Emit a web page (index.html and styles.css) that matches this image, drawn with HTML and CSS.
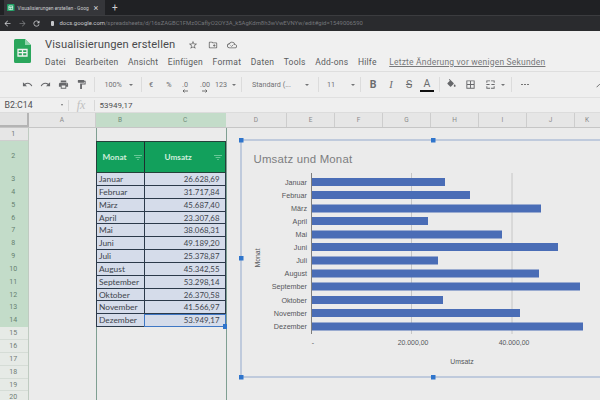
FILE: index.html
```html
<!DOCTYPE html>
<html lang="de">
<head>
<meta charset="utf-8">
<title>Visualisierungen erstellen</title>
<link rel="stylesheet" href="styles.css">
</head>
<body>
<div class="app">
  <div class="tabstrip">
    <div class="tab">
      <svg class="favicon" viewBox="0 0 8 8"><rect width="8" height="8" rx="1" fill="#1e9e63"/><path d="M2 2h4v4H2zM2 3.6h4M4 3.6V6" fill="none" stroke="#fff" stroke-width=".7"/></svg>
      <span class="tabtitle">Visualisierungen erstellen - Goog</span>
      <span class="tabclose">×</span>
    </div>
    <span class="newtab">+</span>
  </div>
  <div class="addressbar">
    <svg class="navicon" viewBox="0 0 24 24"><path fill="#c8cacd" d="M20 11H7.8l5.6-5.6L12 4l-8 8 8 8 1.4-1.4L7.8 13H20z"/></svg>
    <svg class="navicon" viewBox="0 0 24 24"><path fill="#77797c" d="M12 4l-1.4 1.4 5.6 5.6H4v2h12.2l-5.6 5.6L12 20l8-8z"/></svg>
    <svg class="navicon" viewBox="0 0 24 24"><path fill="#c8cacd" d="M17.65 6.35A8 8 0 1 0 19.73 14h-2.08A6 6 0 1 1 12 6c1.66 0 3.14.69 4.22 1.78L13 11h7V4z"/></svg>
    <div class="url"><span class="lock"></span><b>docs.google.com</b>/spreadsheets/d/16sZAGBC1FMz0CaflyO2OY3A_k5AgKdm8h3wVwEVNYw/edit#gid=1549006590</div>
  </div>
  <header class="docbar">
    <svg class="sheetlogo" viewBox="0 0 17 24"><path d="M1.5 0H11l6 6v16.5a1.5 1.5 0 0 1-1.5 1.5H1.5A1.5 1.5 0 0 1 0 22.5V1.5A1.5 1.5 0 0 1 1.5 0z" fill="#2aa65c"/><path d="M11 0l6 6h-6z" fill="#8fd3ab"/><path d="M4 10.5h9V17H4zM4 13.7h9M8.5 10.5V17" fill="none" stroke="#f1f1f1" stroke-width="1.3"/></svg>
    <div class="docinfo">
      <div class="titleline">
        <span class="doctitle">Visualisierungen erstellen</span>
        <svg class="ticon" viewBox="0 0 24 24"><path fill="#666" d="M22 9.24l-7.19-.62L12 2 9.19 8.63 2 9.24l5.46 4.73L5.82 21 12 17.27 18.18 21l-1.63-7.03L22 9.24zM12 15.4l-3.76 2.27 1-4.28-3.32-2.88 4.38-.38L12 6.1l1.71 4.04 4.38.38-3.32 2.88 1 4.28L12 15.4z"/></svg>
        <svg class="ticon" viewBox="0 0 24 24"><path fill="#666" d="M20 6h-8l-2-2H4c-1.11 0-2 .89-2 2v12c0 1.11.89 2 2 2h16c1.11 0 2-.89 2-2V8c0-1.11-.89-2-2-2zm0 12H4V6h5.17l2 2H20v10zm-8-4h2v2h2v-2h2v-2h-2v-2h-2v2h-2v2z"/></svg>
        <svg class="ticon" viewBox="0 0 24 24"><path fill="#666" d="M19.35 10.04C18.67 6.59 15.64 4 12 4 9.11 4 6.6 5.64 5.35 8.04 2.34 8.36 0 10.91 0 14c0 3.31 2.69 6 6 6h13c2.76 0 5-2.24 5-5 0-2.64-2.05-4.78-4.65-4.96zM19 18H6c-2.21 0-4-1.79-4-4s1.79-4 4-4h.71C7.37 7.69 9.48 6 12 6c3.04 0 5.5 2.46 5.5 5.5v.5H19c1.66 0 3 1.34 3 3s-1.34 3-3 3z"/><path d="M8.5 13l2.5 2.5 4.5-4.5" fill="none" stroke="#666" stroke-width="1.8"/></svg>
      </div>
      <nav class="menu">
        <span>Datei</span><span>Bearbeiten</span><span>Ansicht</span><span>Einfügen</span><span>Format</span><span>Daten</span><span>Tools</span><span>Add-ons</span><span>Hilfe</span>
        <span class="lastedit">Letzte Änderung vor wenigen Sekunden</span>
      </nav>
    </div>
  </header>
  <div class="toolbar">
    <svg class="ic first" viewBox="0 0 24 24"><path d="M12.5 8c-2.65 0-5.05.99-6.9 2.6L2 7v9h9l-3.62-3.62c1.39-1.16 3.16-1.88 5.12-1.88 3.54 0 6.55 2.31 7.6 5.5l2.37-.78C21.08 11.03 17.15 8 12.5 8z"/></svg>
    <svg class="ic" viewBox="0 0 24 24"><path d="M18.4 10.6C16.55 8.99 14.15 8 11.5 8c-4.65 0-8.58 3.03-9.96 7.22L3.9 16c1.05-3.19 4.05-5.5 7.6-5.5 1.95 0 3.73.72 5.12 1.88L13 16h9V7l-3.6 3.6z"/></svg>
    <svg class="ic" viewBox="0 0 24 24"><path d="M19 8H5c-1.66 0-3 1.34-3 3v6h4v4h12v-4h4v-6c0-1.66-1.34-3-3-3zm-3 11H8v-5h8v5zm3-7c-.55 0-1-.45-1-1s.45-1 1-1 1 .45 1 1-.45 1-1 1zm-1-9H6v4h12V3z"/></svg>
    <svg class="ic" viewBox="0 0 24 24"><path d="M18 4V3c0-.55-.45-1-1-1H5c-.55 0-1 .45-1 1v4c0 .55.45 1 1 1h12c.55 0 1-.45 1-1V6h1v4H9v11c0 .55.45 1 1 1h2c.55 0 1-.45 1-1v-9h8V4h-3z"/></svg>
    <i class="sep"></i>
    <span class="tt zoomval">100%</span><i class="caret c-zoom"></i>
    <i class="sep"></i>
    <span class="tt sym">€</span><span class="tt sym">%</span>
    <span class="tt dec">.0<svg class="arrow" viewBox="0 0 6 4"><path d="M6 2H1M2.5.5L1 2l1.5 1.5" fill="none" stroke="#555" stroke-width=".8"/></svg></span>
    <span class="tt dec">.00<svg class="arrow" viewBox="0 0 6 4"><path d="M0 2h5M3.5.5L5 2 3.5 3.5" fill="none" stroke="#555" stroke-width=".8"/></svg></span>
    <span class="tt num">123</span><i class="caret c-num"></i>
    <i class="sep"></i>
    <span class="tt font">Standard (...</span><i class="caret c-font"></i>
    <i class="sep"></i>
    <span class="tt size">11</span><i class="caret c-size"></i>
    <i class="sep"></i>
    <span class="fmt bold">B</span><span class="fmt ital">I</span><span class="fmt strike">S</span>
    <span class="fmt acolor">A</span>
    <i class="sep"></i>
    <svg class="ic fill" viewBox="0 0 24 24"><path d="M16.56 8.94L7.62 0 6.21 1.41l2.38 2.38-5.15 5.15c-.59.59-.59 1.54 0 2.12l5.5 5.5c.29.29.68.44 1.06.44s.77-.15 1.06-.44l5.5-5.5c.59-.58.59-1.53 0-2.12zM19 11.5s-2 2.17-2 3.5c0 1.1.9 2 2 2s2-.9 2-2c0-1.33-2-3.5-2-3.5z"/></svg>
    <svg class="ic" viewBox="0 0 24 24"><path d="M3 3v18h18V3H3zm8 16H5v-6h6v6zm0-8H5V5h6v6zm8 8h-6v-6h6v6zm0-8h-6V5h6v6z"/></svg>
    <svg class="ic merge" viewBox="0 0 24 24"><path d="M3 3h8v2H5v3H3zM13 3h8v5h-2V5h-6zM3 16h2v3h6v2H3zM19 16h2v5h-8v-2h6zM3 11h7v2H3zM14 11h7v2h-7z"/></svg>
    <i class="caret c-merge"></i>
    <i class="sep"></i>
    <span class="more"><i></i><i></i><i></i></span>
    <svg class="collapse" viewBox="0 0 12 8"><path d="M1 7l5-5 5 5" fill="none" stroke="#666" stroke-width="1.6"/></svg>
  </div>
  <div class="formulabar">
    <span class="namebox">B2:C14</span><i class="caret c-name"></i>
    <i class="fsep"></i>
    <span class="fx">fx</span>
    <i class="fsep"></i>
    <span class="fvalue">53949,17</span>
  </div>
  <div class="colheads">
    <div class="corner"></div>
    <div class="ch a">A</div><div class="ch b sel">B</div><div class="ch c sel">C</div><div class="ch d">D</div>
    <div class="ch w">E</div><div class="ch w">F</div><div class="ch w">G</div><div class="ch w">H</div><div class="ch w">I</div><div class="ch w">J</div><div class="ch k">K</div>
  </div>
  <main class="grid">
    <div class="rowheads">
      <div class="rh r1">1</div><div class="rh r2 sel">2</div>
      <div class="rh sel">3</div><div class="rh sel">4</div><div class="rh sel">5</div><div class="rh sel">6</div><div class="rh sel">7</div><div class="rh sel">8</div><div class="rh sel">9</div><div class="rh sel">10</div><div class="rh sel">11</div><div class="rh sel">12</div><div class="rh sel">13</div><div class="rh sel">14</div>
      <div class="rh">15</div><div class="rh">16</div><div class="rh">17</div><div class="rh">18</div><div class="rh">19</div><div class="rh">20</div>
    </div>
    <div class="sheet">
      <div class="selcol">
        <div class="table">
          <div class="thead"><span>Monat</span><svg class="filter" viewBox="0 0 10 6"><path d="M0 .5h10M2 3h6M4 5.5h2" stroke="#7fd0a6" stroke-width="1"/></svg></div>
          <div class="thead"><span>Umsatz</span><svg class="filter" viewBox="0 0 10 6"><path d="M0 .5h10M2 3h6M4 5.5h2" stroke="#7fd0a6" stroke-width="1"/></svg></div>
          <div class="td">Januar</div><div class="td n">26.628,69</div>
          <div class="td">Februar</div><div class="td n">31.717,84</div>
          <div class="td">März</div><div class="td n">45.687,40</div>
          <div class="td">April</div><div class="td n">23.307,68</div>
          <div class="td">Mai</div><div class="td n">38.068,31</div>
          <div class="td">Juni</div><div class="td n">49.189,20</div>
          <div class="td">Juli</div><div class="td n">25.378,87</div>
          <div class="td">August</div><div class="td n">45.342,55</div>
          <div class="td">September</div><div class="td n">53.298,14</div>
          <div class="td">Oktober</div><div class="td n">26.370,58</div>
          <div class="td">November</div><div class="td n">41.566,97</div>
          <div class="td">Dezember</div><div class="td n active">53.949,17<i class="dragdot"></i></div>
        </div>
      </div>
    </div>
    <svg class="chart" viewBox="236 135 364 245">
      <rect class="frame" x="241" y="139" width="400" height="237"/>
      <text class="ctitle" x="253.5" y="162">Umsatz und Monat</text>
      <path class="gl" d="M411.5 172V333M512 172V333"/>
      <g class="bars">
        <rect x="311" y="177" width="134" height="8"/>
        <rect x="311" y="190" width="159" height="8"/>
        <rect x="311" y="203.5" width="230" height="8"/>
        <rect x="311" y="216" width="117" height="8"/>
        <rect x="311" y="229.5" width="191" height="8"/>
        <rect x="311" y="242" width="247" height="8"/>
        <rect x="311" y="255.5" width="127" height="8"/>
        <rect x="311" y="268.5" width="228" height="8"/>
        <rect x="311" y="281.5" width="269" height="8"/>
        <rect x="311" y="295" width="132" height="8"/>
        <rect x="311" y="308" width="209" height="8"/>
        <rect x="311" y="321.5" width="272" height="8"/>
      </g>
      <path class="ax" d="M311.5 172V333"/>
      <g class="yl">
        <text x="307" y="183.5">Januar</text><text x="307" y="196.5">Februar</text><text x="307" y="210">März</text><text x="307" y="222.5">April</text><text x="307" y="236">Mai</text><text x="307" y="248.5">Juni</text><text x="307" y="262">Juli</text><text x="307" y="275">August</text><text x="307" y="288">September</text><text x="307" y="301.5">Oktober</text><text x="307" y="314.5">November</text><text x="307" y="328">Dezember</text>
      </g>
      <g class="xl">
        <text x="313" y="344">-</text><text x="413" y="344">20.000,00</text><text x="514" y="344">40.000,00</text>
        <text x="462" y="363">Umsatz</text>
      </g>
      <text class="ytitle" transform="translate(260 257) rotate(-90)">Monat</text>
      <g class="handles">
        <rect x="239" y="137" width="4.5" height="4.5"/><rect x="431" y="137" width="4.5" height="4.5"/>
        <rect x="239" y="255" width="4.5" height="4.5"/>
        <rect x="239" y="374" width="4.5" height="4.5"/><rect x="431" y="374" width="4.5" height="4.5"/>
      </g>
    </svg>
  </main>
</div>
</body>
</html>
```
FILE: styles.css
```css
* { box-sizing: border-box; }
html, body { margin: 0; padding: 0; width: 600px; height: 400px; overflow: hidden; background: #ebebeb; }
.app { width: 600px; height: 400px; display: flex; flex-direction: column; font-family: Roboto, "Liberation Sans", sans-serif; color: #5f6062; }

.tabstrip { height: 15px; background: #202124; display: flex; align-items: center; flex: none; }
.tab { width: 101px; height: 15px; margin-left: 4px; background: #35363a; display: flex; align-items: center; padding-left: 3px; }
.favicon { width: 7.5px; height: 7.5px; flex: none; }
.tabtitle { font-size: 4.9px; color: #c9cbce; margin-left: 3px; width: 73px; white-space: nowrap; }
.tabclose { font-size: 9px; color: #d0d0d0; margin-left: 3px; }
.newtab { font-size: 10px; color: #d0d0d0; margin-left: 7px; }

.addressbar { height: 15.5px; background: #2a2b2e; border-top: 1px solid #3b3c3f; display: flex; align-items: center; padding-left: 3px; flex: none; }
.navicon { width: 9px; height: 9px; margin-right: 5.5px; flex: none; }
.url { font-size: 5.9px; color: #74767a; white-space: nowrap; margin-left: 4px; display: flex; align-items: center; }
.url b { font-weight: 400; color: #c6c8cb; }
.lock { width: 3.5px; height: 4.5px; background: #c6c8cb; border-radius: 1px; margin-right: 5.5px; }

.docbar { height: 41.5px; background: #f0f0f0; display: flex; flex: none; border-bottom: 1px solid #dedede; }
.sheetlogo { width: 17px; height: 24px; margin: 8.5px 0 0 13.5px; flex: none; }
.docinfo { margin-left: 14.5px; display: flex; flex-direction: column; }
.titleline { display: flex; align-items: center; height: 14px; margin-top: 7px; }
.doctitle { font-size: 11.2px; color: #4a4b4d; letter-spacing: .1px; width: 130px; white-space: nowrap; }
.ticon { width: 10px; height: 10px; margin-left: 9.5px; flex: none; }
.ticon:nth-of-type(1) { margin-left: 13px; }
.menu { display: flex; font-size: 8.5px; color: #5b5c5e; letter-spacing: .25px; margin-top: 5px; white-space: nowrap; }
.menu span { margin-right: 9.5px; }
.lastedit { margin-left: 3px; text-decoration: underline; color: #77787a; letter-spacing: .2px; }

.toolbar { height: 26px; background: #efefef; border-bottom: 1px solid #e0e0e0; display: flex; align-items: center; flex: none; position: relative; }
.ic { width: 11px; height: 11px; fill: #66676a; margin-right: 7px; flex: none; }
.ic.first { margin-left: 21.5px; }
.sep { width: 1px; height: 15px; background: #dcdcdc; flex: none; }
.tt { font-size: 7.2px; color: #717274; white-space: nowrap; flex: none; }
.zoomval { margin-left: 10px; width: 24px; }
.caret { width: 0; height: 0; border-left: 2.5px solid transparent; border-right: 2.5px solid transparent; border-top: 2.8px solid #737476; flex: none; }
.c-zoom { margin-right: 8.5px; }
.sym { width: 18px; text-align: center; color: #7a7b7d; font-weight: 500; }
.dec { width: 20px; text-align: center; position: relative; }
.sym + .dec { margin-left: -3px; }
.arrow { position: absolute; left: 7px; top: 9px; width: 6px; height: 4px; }
.num { width: 17px; }
.c-num { margin-right: 5px; }
.font { margin-left: 10px; width: 53px; }
.c-font { margin-right: 9px; }
.size { margin-left: 8px; width: 24px; }
.c-size { margin-right: 5px; }
.fmt { width: 18px; text-align: center; font-size: 10.5px; color: #6b6c6e; flex: none; line-height: 14px; }
.bold { font-weight: 700; margin-left: 3px; }
.ital { font-style: italic; font-family: "Liberation Serif", serif; }
.strike { text-decoration: line-through; }
.acolor { border-bottom: 2.5px solid #111; width: 14px; margin: 0 5px 0 2px; line-height: 11px; padding-bottom: 1px; }
.fill { margin-left: 6px; margin-right: 8px; }
.merge { margin-left: 2px; margin-right: 5px; }
.c-merge { margin-right: 6px; }
.more { display: flex; gap: 1.5px; margin-left: 9px; }
.more i { width: 1.6px; height: 1.6px; background: #666; border-radius: 50%; }
.collapse { position: absolute; right: -3px; top: 11px; width: 7px; height: 5px; }

.formulabar { height: 15px; background: #efefef; border-bottom: 1px solid #dcdcdc; display: flex; align-items: center; flex: none; }
.namebox { font-size: 8.8px; color: #4f5052; width: 56px; margin-left: 4.5px; }
.c-name { margin-right: 5px; border-left-width: 1.8px; border-right-width: 1.8px; border-top-width: 2.2px; }
.fsep { width: 1px; height: 11px; background: #d8d8d8; flex: none; }
.fx { font-family: "Liberation Serif", serif; font-style: italic; font-size: 12px; color: #c0c0c0; width: 25px; text-align: center; }
.fvalue { font-size: 8px; color: #4f5052; margin-left: 5px; }

.colheads { height: 15px; display: flex; background: #e6e6e6; border-bottom: 1px solid #c6c6c6; flex: none; }
.corner { width: 28.5px; border-right: 2px solid #b4b4b4; border-bottom: 2px solid #b4b4b4; background: #e2e2e2; flex: none; }
.ch { font-size: 6.5px; color: #8a8a8a; text-align: center; line-height: 14px; border-right: 1px solid #cdcdcd; flex: none; }
.ch.a { width: 67.5px; }
.ch.b { width: 49px; }
.ch.c { width: 81px; }
.ch.d { width: 61px; }
.ch.w { width: 48px; }
.ch.k { width: 24px; border-right: 0; }
.ch.sel { background: #c3dcc9; color: #6f8a78; border-right-color: #c3dcc9; }

.grid { flex: 1; position: relative; display: flex; min-height: 0; background: #ebebeb; overflow: hidden; }
.rowheads { width: 28.5px; flex: none; background: #e6eae6; border-right: 1px solid #bfcbc1; }
.rh { height: 12.85px; font-size: 7px; color: #717c74; text-align: center; line-height: 12.85px; border-bottom: 1px solid #d5dcd6; padding-right: 1px; }
.rh.r1 { height: 13px; line-height: 13px; background: #e6e6e6; border-bottom: 1px solid #cfcfcf; }
.rh.r2 { height: 32px; line-height: 30px; }
.rh.sel { background: #c3dcc9; border-bottom-color: #c3dcc9; color: #66806f; }

.sheet { flex: 1; padding-left: 67.5px; }
.selcol { width: 130.5px; height: 100%; padding-top: 13px; border-left: 1px solid #7f9f92; border-right: 1px solid #7f9f92; position: relative; }
.table { display: grid; grid-template-columns: 48px 81.5px; grid-template-rows: 32px; grid-auto-rows: 12.85px; margin: 0 -1px; font-family: Lato, "Liberation Sans", sans-serif; }
.thead { height: 32px; background: #12a05c; border: 1px solid #24403a; border-right: 0; color: #cfeedd; font-size: 8.2px; font-weight: 700; display: flex; align-items: center; position: relative; padding-left: 5.5px; }
.thead + .thead { border-left: 1px solid #1e2e30; border-right: 1px solid #24403a; padding-left: 19.5px; }
.filter { position: absolute; right: 2.5px; top: 13px; width: 8px; height: 5px; }
.td { font-size: 8.4px; color: #40444c; background: #d5dcea; border: 1px solid #2c3a4a; border-top: 0; border-right: 0; line-height: 12px; padding-left: 2px; white-space: nowrap; }
.td.n { font-size: 7.9px; text-align: right; padding-right: 5px; border-right: 1px solid #2c3a4a; position: relative; }
.td.active { outline: 1.5px solid #3f77c4; outline-offset: -1px; }
.dragdot { position: absolute; right: -2.5px; bottom: -2.5px; width: 4.5px; height: 4.5px; background: #2f75cc; }

.chart { position: absolute; left: 236px; top: 8px; width: 364px; height: 245px; font-family: "Liberation Sans", sans-serif; }
.frame { fill: none; stroke: #93a9cd; stroke-width: 1; }
.ctitle { font-size: 11.4px; fill: #7c7d80; letter-spacing: .2px; }
.gl { stroke: #c6c6c6; fill: none; stroke-width: 1; }
.ax { stroke: #7e7e7e; fill: none; stroke-width: 1; }
.bars rect { fill: #4a6db6; }
.yl text { font-size: 7.2px; fill: #55565a; text-anchor: end; }
.xl text { font-size: 6.9px; fill: #55565a; text-anchor: middle; }
.ytitle { font-size: 6.9px; fill: #55565a; text-anchor: middle; }
.handles rect { fill: #2f75cc; }
```
